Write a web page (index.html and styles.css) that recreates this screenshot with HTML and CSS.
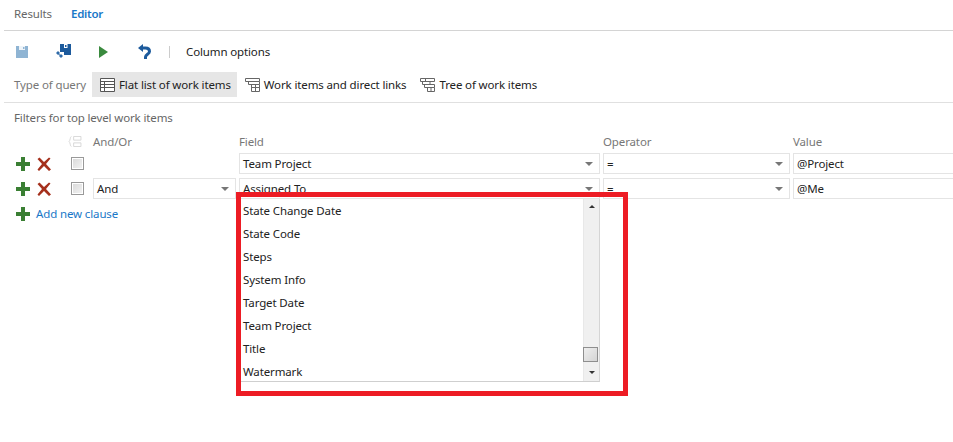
FILE: index.html
```html
<!DOCTYPE html>
<html lang="en">
<head>
<meta charset="utf-8">
<title>Query editor</title>
<link rel="stylesheet" href="styles.css">
</head>
<body>
<svg class="defs" width="0" height="0" aria-hidden="true">
  <symbol id="plus" viewBox="0 0 14 14"><path d="M5 0h4v5h5v4H9v5H5V9H0V5h5z" fill="#3a7f33"/></symbol>
  <symbol id="cross" viewBox="0 0 14 14"><path d="M.5 2 2.500.5 7 5 12 .5 13.500 1.500 9 7l5 5.500-2 1.500-5-5-5 5-1.500-1.500L5 7z" fill="#a5301c"/></symbol>
  <symbol id="flat" viewBox="0 0 15 14"><path d="M.5.500h14v13H.5zM.5 3.500h14M.5 6.500h14M.5 9.500h14M4.500 3.500v10" fill="#fff" stroke="#555"/></symbol>
  <symbol id="direct" viewBox="0 0 15 14"><path d="M.5.500h14v3H.5zM3.500 3.500v3h11v-3M6.500 6.500v7h8v-7M6.500 9.500h8M10.500 6.500v7" fill="none" stroke="#666"/></symbol>
  <symbol id="tree" viewBox="0 0 15 14"><path d="M.5.500h14v3H.5zM2.500 3.500v3h12M4.500 6.500v3h10v-3M7.500 9.500v4h7v-4M11 9.500v4M5.500.500v3M10 3.500v3" fill="none" stroke="#666"/></symbol>
</svg>
<main class="page">
  <nav class="tabs">
    <span class="tab">Results</span>
    <span class="tab tab-active">Editor</span>
  </nav>
  <div class="toolbar">
    <svg class="tool" width="12" height="12" viewBox="0 0 12 12"><path d="M0 0h12v12H0z" fill="#8fb4d3"/><path d="M3 0h6v4H3z" fill="#eef4f9"/><path d="M7 1h1.500v2H7z" fill="#8fb4d3"/></svg>
    <svg class="tool tool-save" width="15" height="15" viewBox="0 0 15 15"><path d="M4 0h11v11H8V8H4z" fill="#1c5a9c"/><path d="M8 0h3.500v4H8z" fill="#fff"/><path d="M9 1h1.500v2H9z" fill="#1c5a9c"/><path d="M0 9l2-2 2 2-2 2zM3 12l2-2 2 2-2 2zM2.500 9.500l1.500 1-1 1z" fill="#2f6aa8"/></svg>
    <svg class="tool tool-run" width="9" height="12" viewBox="0 0 9 12"><path d="M0 0l9 6-9 6z" fill="#3a8a3e"/></svg>
    <svg class="tool tool-undo" width="13" height="15" viewBox="0 0 13 15"><path d="M0 4 5 0v8z" fill="#1c5a9c"/><path d="M4 4h3.500c2.500 0 4 1.500 4 3.500 0 2.500-4 3-4 5.500v2" fill="none" stroke="#1c5a9c" stroke-width="3"/></svg>
    <span class="tool-sep"></span>
    <span class="tool-label">Column options</span>
  </div>
  <div class="query-types">
    <span class="type-label">Type of query</span>
    <span class="type type-on"><svg width="15" height="14"><use href="#flat"/></svg>Flat list of work items</span>
    <span class="type"><svg width="15" height="14"><use href="#direct"/></svg>Work items and direct links</span>
    <span class="type"><svg width="15" height="14"><use href="#tree"/></svg>Tree of work items</span>
  </div>
  <h2 class="filters-title">Filters for top level work items</h2>
  <div class="grid">
    <span></span>
    <svg class="group-icon" width="14" height="11" viewBox="0 0 14 12"><path d="M3 .5C1.500 1 2 5 .5 6 2 7 1.500 11 3 11.500M5.500.5h8v4h-8zM5.500 7.500h8v4h-8z" fill="none" stroke="#d5d5d5"/></svg>
    <span class="head">And/Or</span>
    <span class="head">Field</span>
    <span class="head">Operator</span>
    <span class="head">Value</span>

    <span class="actions"><svg class="plus" width="14" height="14"><use href="#plus"/></svg><svg width="14" height="14"><use href="#cross"/></svg></span>
    <span class="check"></span>
    <span></span>
    <span class="combo">Team Project</span>
    <span class="combo">=</span>
    <span class="combo combo-plain">@Project</span>

    <span class="actions"><svg class="plus" width="14" height="14"><use href="#plus"/></svg><svg width="14" height="14"><use href="#cross"/></svg></span>
    <span class="check"></span>
    <span class="combo">And</span>
    <span class="combo">Assigned To</span>
    <span class="combo">=</span>
    <span class="combo combo-plain">@Me</span>
  </div>
  <div class="add-clause"><svg width="14" height="14"><use href="#plus"/></svg><span>Add new clause</span></div>
</main>
<div class="dropdown">
  <ul class="options">
    <li>State Change Date</li>
    <li>State Code</li>
    <li>Steps</li>
    <li>System Info</li>
    <li>Target Date</li>
    <li>Team Project</li>
    <li>Title</li>
    <li>Watermark</li>
  </ul>
  <div class="scrollbar">
    <span class="arrow-up"></span>
    <span class="thumb"></span>
    <span class="arrow-down"></span>
  </div>
</div>
<div class="highlight"></div>
</body>
</html>
```

FILE: styles.css
```css
* { box-sizing: border-box; }
html, body { height: 100%; }
body {
  margin: 0;
  background: #fff;
  color: #222;
  font: 11.5px/16px "Noto Sans", "Open Sans", sans-serif;
  letter-spacing: -0.13px;
  overflow: hidden;
  position: relative;
}
.defs { position: absolute; }
svg { display: block; flex: none; }
.page { padding-left: 4px; width: 953px; }

.tabs {
  display: flex;
  gap: 19px;
  height: 31px;
  padding: 6px 0 0 10px;
  border-bottom: 1px solid #d4d4d4;
  color: #666;
}
.tab-active { color: #1a78c8; font-weight: 600; letter-spacing: -0.25px; }

.toolbar {
  display: flex;
  align-items: center;
  height: 41px;
  padding-left: 12px;
}
.tool-save { margin-left: 28px; }
.tool-run { margin-left: 28px; }
.tool-undo { margin-left: 30px; }
.tool-sep { width: 1px; height: 12px; background: #ccc; margin-left: 18px; }
.tool-label { margin-left: 16px; }

.query-types {
  display: flex;
  align-items: center;
  height: 31px;
  padding: 0 0 5px 10px;
  border-bottom: 1px solid #e0e0e0;
}
.type-label { color: #777; width: 78px; }
.type {
  display: flex;
  align-items: center;
  gap: 4px;
  height: 25px;
  padding: 0 6px 0 8px;
}
.type-on { background: #e6e6e6; }

.filters-title {
  margin: 0;
  padding: 7px 0 0 10px;
  height: 31px;
  font: inherit;
  color: #666;
}

.grid {
  display: grid;
  grid-template-columns: 50px 22px 143px 361px 187px 160px;
  grid-template-rows: 15px 21px 21px;
  gap: 4px 3px;
  padding-left: 11px;
  align-items: center;
}
.head { color: #777; }
.actions { display: flex; gap: 7px; padding: 1px 0 0 1px; }
.check {
  width: 13px;
  height: 13px;
  margin-left: 3px;
  border: 1px solid #999;
  background: linear-gradient(135deg, #d8d8d8, #f4f4f4);
  box-shadow: inset 0 0 0 1px #fff;
}
.combo {
  position: relative;
  display: block;
  height: 100%;
  padding: 2px 3px;
  border: 1px solid #e4e4e4;
  color: #222;
}
.combo::after {
  content: "";
  position: absolute;
  right: 6px;
  top: 8px;
  border: 4px solid transparent;
  border-top: 4px solid #777;
  border-bottom: 0;
}
.combo-plain { border-right: 0; }
.combo-plain::after { display: none; }

.add-clause {
  display: flex;
  align-items: center;
  gap: 6px;
  padding: 7px 0 0 12px;
  color: #1a78c8;
}

.dropdown {
  position: absolute;
  left: 240px;
  top: 199px;
  width: 360px;
  height: 183px;
  display: flex;
  background: #fff;
  border-bottom: 1px solid #cfcfcf;
  border-right: 1px solid #d5d5d5;
}
.options {
  flex: 1;
  margin: 0;
  padding: 0 0 0 3px;
  list-style: none;
}
.options li { height: 23px; line-height: 23px; }
.scrollbar {
  width: 16px;
  background: #f0f0f0;
  border-left: 1px solid #e8e8e8;
  display: flex;
  flex-direction: column;
  align-items: center;
  padding-top: 6px;
  position: relative;
}
.arrow-up { border: 3px solid transparent; border-bottom: 3px solid #333; border-top: 0; }
.arrow-down {
  position: absolute;
  bottom: 7px;
  border: 3px solid transparent;
  border-top: 3px solid #333;
  border-bottom: 0;
}
.thumb {
  position: absolute;
  left: -1px;
  top: 148px;
  width: 15px;
  height: 15px;
  border: 1px solid #8e8e8e;
  background: linear-gradient(135deg, #eee, #d4d4d4);
}
.highlight {
  position: absolute;
  left: 236px;
  top: 192px;
  width: 392px;
  height: 204px;
  border: 5px solid #ed1c24;
}
```
